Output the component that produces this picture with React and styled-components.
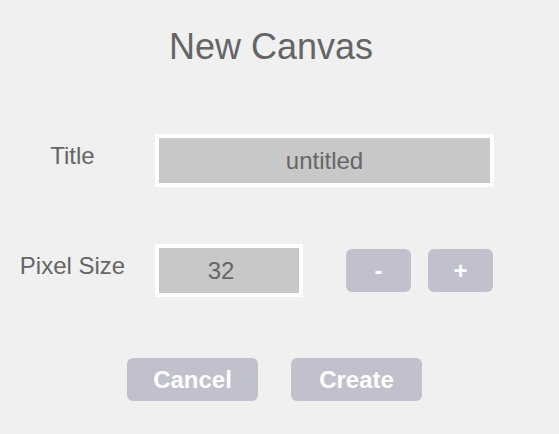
import React from "react";
import styled, { createGlobalStyle } from "styled-components";

const GlobalStyle = createGlobalStyle`
  html, body {
    margin: 0;
    padding: 0;
    background: #f0f0f0;
    font-family: "Liberation Sans", Arial, sans-serif;
  }
`;

const Panel = styled.div`
  width: 559px;
  height: 434px;
  box-sizing: border-box;
  padding-top: 26px;
  display: flex;
  flex-direction: column;
`;

const Heading = styled.h1`
  margin: 0;
  width: 542px;
  text-align: center;
  font-size: 36px;
  font-weight: normal;
  line-height: 41px;
  color: #656565;
`;

const Form = styled.div`
  margin-top: 67px;
  display: flex;
  flex-direction: column;
  gap: 57px;
`;

const Row = styled.div`
  display: grid;
  grid-template-columns: 145px auto;
  column-gap: 10px;
  align-items: center;
`;

const Label = styled.label`
  text-align: center;
  font-size: 24px;
  color: #656565;
  padding-bottom: 9px;
`;

const Controls = styled.div`
  display: flex;
  align-items: center;
`;

const Field = styled.input`
  box-sizing: border-box;
  width: ${(p) => p.$width}px;
  height: 53px;
  margin: 0;
  padding: 0 ${(p) => p.$padRight || 0}px 0 0;
  border: 4px solid #ffffff;
  background: #c8c8c8;
  color: #666666;
  font-family: "Liberation Sans", Arial, sans-serif;
  font-size: 24px;
  text-align: center;
  outline: none;
`;

const Steppers = styled.div`
  display: flex;
  gap: 17px;
  margin-left: 43px;
`;

const Button = styled.button`
  box-sizing: border-box;
  width: ${(p) => p.$width}px;
  height: 43px;
  margin: 0;
  padding: 0;
  border: none;
  border-radius: 6px;
  background: #c1c1cd;
  color: #ffffff;
  font-family: "Liberation Sans", Arial, sans-serif;
  font-size: 24px;
  font-weight: bold;
  cursor: pointer;
`;

const Actions = styled.div`
  margin-top: 61px;
  display: flex;
  gap: 33px;
  padding-left: 127px;
`;

export default function App() {
  return (
    <>
      <GlobalStyle />
      <Panel>
        <Heading>New Canvas</Heading>
        <Form>
          <Row>
            <Label>Title</Label>
            <Controls>
              <Field $width={339} defaultValue="untitled" />
            </Controls>
          </Row>
          <Row>
            <Label>Pixel Size</Label>
            <Controls>
              <Field $width={148} $padRight={16} defaultValue="32" />
              <Steppers>
                <Button $width={65}>-</Button>
                <Button $width={65}>+</Button>
              </Steppers>
            </Controls>
          </Row>
        </Form>
        <Actions>
          <Button $width={131}>Cancel</Button>
          <Button $width={131}>Create</Button>
        </Actions>
      </Panel>
    </>
  );
}
